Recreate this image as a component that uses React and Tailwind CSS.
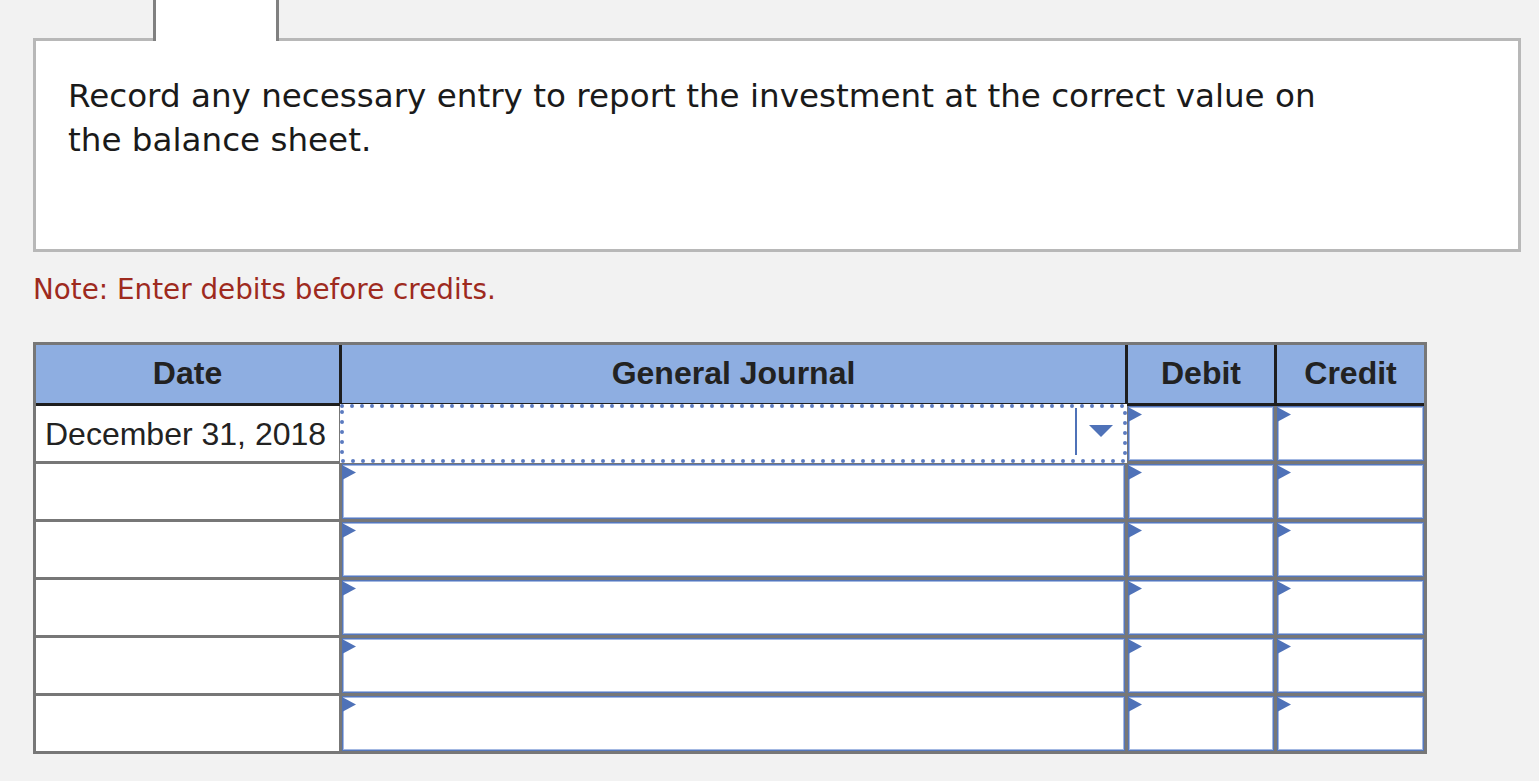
import React from 'react'

const ROWS = [
  { date: 'December 31, 2018', active: true },
  { date: '' },
  { date: '' },
  { date: '' },
  { date: '' },
  { date: '' },
]

const COLS = 'grid grid-cols-[303px_783px_146px_147px]'

function Flag() {
  return (
    <svg className="absolute -left-[1px] top-0" width="14" height="15" viewBox="0 0 14 15">
      <path d="M0 0L14 7.5L0 15Z" fill="#4f72b8" />
    </svg>
  )
}

function InputCell() {
  return (
    <div className="relative bg-white border border-[#5577bb] shadow-[inset_0_0_0_1px_#a3b8e2]">
      <Flag />
    </div>
  )
}

// focused select: dotted focus ring drawn as round dots
function ActiveSelect() {
  return (
    <div className="relative -m-[2px] flex items-start justify-end gap-[12px] bg-white pr-[14px]">
      <svg className="pointer-events-none absolute left-0 top-0" width="787" height="59" viewBox="0 0 787 59">
        <rect
          x="2"
          y="2"
          width="783"
          height="55"
          fill="none"
          stroke="#5b7bc0"
          strokeWidth="4"
          strokeLinecap="round"
          strokeDasharray="0 10"
        />
      </svg>
      <div className="mt-[4px] h-[47px] w-[2px] bg-[#4f72b8]" />
      <svg className="mt-[21px]" width="24" height="12" viewBox="0 0 24 12">
        <path d="M0 0H24L12 12Z" fill="#4f72b8" />
      </svg>
    </div>
  )
}

export default function App() {
  return (
    <div className="min-h-screen bg-[#f2f2f2] pl-[33px] font-['DejaVu_Sans',Verdana,sans-serif]">
      <div className="relative z-10 ml-[120px] h-[41px] w-[126px] border-x-[3px] border-[#808080] bg-white" />

      <div className="-mt-[3px] h-[214px] w-[1488px] border-[3px] border-[#b8b8b8] bg-white pl-[32px] pt-[33px]">
        <p className="text-[32.6px] leading-[44px] text-[#1a1a1a]">
          <span className="block">Record any necessary entry to report the investment at the correct value on</span>
          <span className="block">the balance sheet.</span>
        </p>
      </div>

      <p className="mt-[20px] text-[27.8px] leading-[36px] text-[#9e2a1e]">Note: Enter debits before credits.</p>

      <div className="mt-[34px] w-[1394px] border-[3px] border-[#777] font-['Liberation_Sans',Arial,sans-serif] text-[32px] text-[#222]">
        <div className={`${COLS} gap-x-[3px] border-b-[3px] border-[#1e1e1e] bg-[#1e1e1e]`}>
          {['Date', 'General Journal', 'Debit', 'Credit'].map((h) => (
            <div key={h} className="flex h-[58px] items-center justify-center bg-[#8eaee1] pb-[3px] font-bold">
              {h}
            </div>
          ))}
        </div>

        <div className={`${COLS} auto-rows-[55px] gap-[3px] bg-[#777]`}>
          {ROWS.map((r, i) => (
            <React.Fragment key={i}>
              <div className="flex items-center bg-white pl-[9px]">{r.date}</div>
              {r.active ? <ActiveSelect /> : <InputCell />}
              <InputCell />
              <InputCell />
            </React.Fragment>
          ))}
        </div>
      </div>
    </div>
  )
}
